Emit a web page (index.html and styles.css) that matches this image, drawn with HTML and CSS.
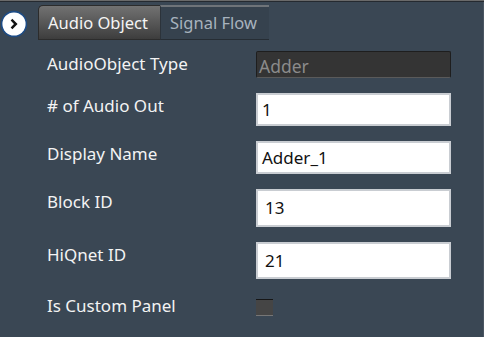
FILE: index.html
```html
<!DOCTYPE html>
<html>
<head>
<meta charset="utf-8">
<link rel="stylesheet" href="styles.css">
</head>
<body>
<div class="frame">
  <div class="header">
    <div class="circle-btn">
      <svg width="28" height="28" viewBox="0 0 28 28">
        <circle cx="14" cy="14" r="13.2" fill="#1d4c86"/>
        <circle cx="14" cy="14" r="11.6" fill="#ffffff"/>
        <path d="M12.4 10.6 L15.8 14 L12.4 17.4" fill="none" stroke="#111" stroke-width="2.5" stroke-linecap="square"/>
      </svg>
    </div>
    <div class="tabs">
      <div class="tab tab-active">Audio Object</div>
      <div class="tab tab-inactive">Signal Flow</div>
    </div>
  </div>
  <div class="form">
    <div class="row r1">
      <div class="label">AudioObject Type</div>
      <div class="field field-disabled">Adder</div>
    </div>
    <div class="row r2">
      <div class="label">#&nbsp;of Audio Out</div>
      <div class="field field-text">1</div>
    </div>
    <div class="row r3">
      <div class="label">Display Name</div>
      <div class="field field-text">Adder_1</div>
    </div>
    <div class="row r4">
      <div class="label">Block ID</div>
      <div class="field field-text pad-more">13</div>
    </div>
    <div class="row r5">
      <div class="label">HiQnet ID</div>
      <div class="field field-text pad-more">21</div>
    </div>
    <div class="row r6">
      <div class="label">Is Custom Panel</div>
      <div class="checkbox"></div>
    </div>
  </div>
</div>
</body>
</html>
```
FILE: styles.css
```css
html, body {
  margin: 0;
  padding: 0;
}
body {
  width: 484px;
  height: 337px;
  background: #3a4754;
  font-family: "Noto Sans", "Open Sans", sans-serif;
  overflow: hidden;
}
.frame {
  height: 337px;
  box-sizing: border-box;
  border-top: 1px solid #6a6a6a;
  box-shadow: inset 0 1px 0 #252a30, inset -1px 0 0 #4a5561;
}
.header {
  display: flex;
  align-items: flex-start;
  height: 39px;
}
.circle-btn {
  width: 28px;
  height: 28px;
  margin-top: 9px;
  margin-left: 0;
}
.circle-btn svg {
  display: block;
}
.tabs {
  display: flex;
  margin-left: 10px;
  margin-top: 4px;
}
.tab {
  height: 35px;
  box-sizing: border-box;
  font-size: 16.5px;
  line-height: 33px;
}
.tab-active {
  width: 122px;
  padding-left: 9px;
  color: #f4f4f4;
  background: linear-gradient(#727272, #3d3d3d);
  border: 1px solid #2c2c2c;
  border-right: none;
  border-radius: 5px 0 0 0;
}
.tab-inactive {
  width: 109px;
  padding-left: 9px;
  color: #a8b3be;
  background: #36424e;
  border-top: 2px solid #6f7479;
  border-bottom: 1px solid #262d34;
  border-left: 1px solid #2c333a;
  line-height: 31px;
}
.form {
  display: flex;
  flex-direction: column;
  gap: 15px;
  margin-top: 11px;
  padding-left: 47px;
}
.row {
  display: grid;
  grid-template-columns: 209px 195px;
  align-items: start;
}
.label {
  color: #f3f3f3;
  font-size: 17px;
  line-height: 20px;
  margin-top: 3px;
}
.field {
  box-sizing: border-box;
  font-size: 17px;
  white-space: nowrap;
}
.field-disabled {
  height: 27px;
  background: #343434;
  border: 1px solid #1e1e1e;
  border-bottom-color: #5a5a5a;
  border-radius: 2px;
  color: #8b8b8b;
  font-size: 17.5px;
  line-height: 28px;
  padding-left: 2px;
}
.field-text {
  background: #ffffff;
  border: 2px solid #c9cdd2;
  color: #111111;
  padding-left: 4px;
}
.r2 .field, .r3 .field {
  height: 33px;
  line-height: 29px;
}
.r4 .field {
  height: 38px;
  line-height: 34px;
}
.r5 .field {
  height: 37px;
  line-height: 33px;
}
.pad-more {
  padding-left: 7px;
}
.r6 {
  margin-top: 1px;
}
.r6 .label {
  margin-top: 1px;
}
.checkbox {
  width: 17px;
  height: 17px;
  box-sizing: border-box;
  margin-top: 4px;
  background: #454545;
  border-top: 1px solid #161616;
  border-bottom: 1px solid #767676;
}
```
